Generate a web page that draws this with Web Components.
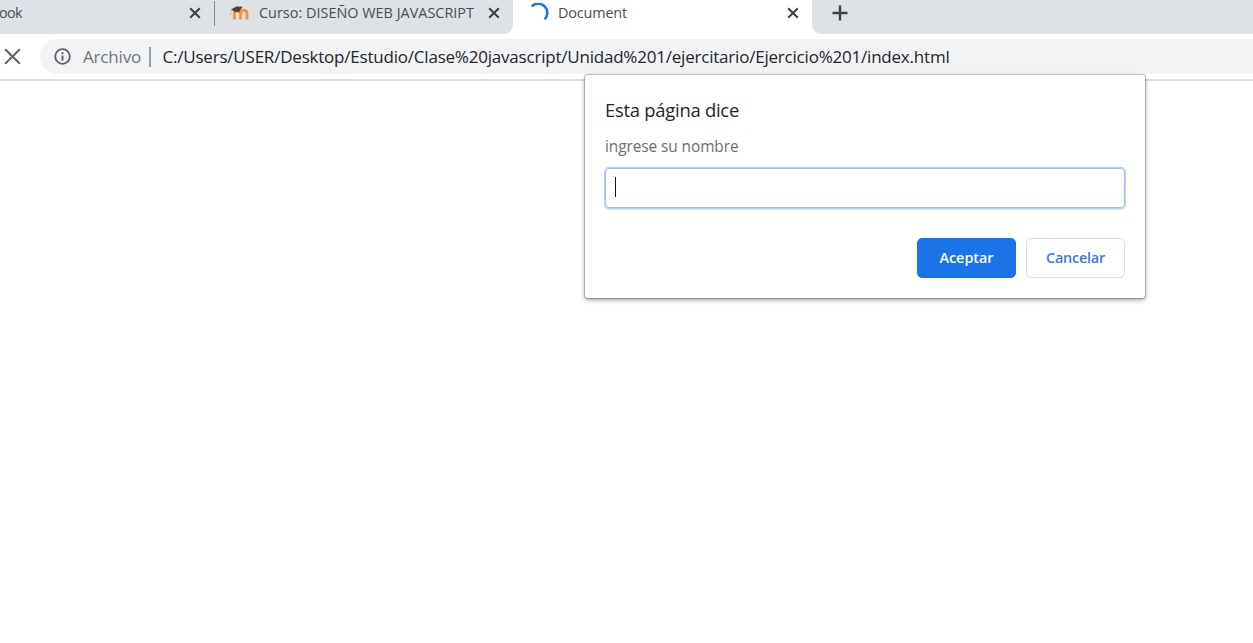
<!DOCTYPE html>
<html lang="es">
<head>
<meta charset="utf-8">
<title>Document</title>
<style>
html,body{margin:0;height:100%;overflow:hidden;background:#fff}
body{font-family:"Open Sans","Noto Sans",sans-serif}
</style>
</head>
<body>
<browser-window></browser-window>
<script>
const define = (name, html, ready) => customElements.define(name, class extends HTMLElement {
  constructor() {
    super();
    this.attachShadow({ mode: 'open' }).innerHTML = html;
  }
  connectedCallback() { if (ready) ready(this); }
});

/* One-line label whose tracking is adjusted to fill the given width. */
define('ui-label', `<style>
:host{display:block;white-space:nowrap;flex:none}
span{display:inline-block}
</style><span><slot></slot></span>`, el => {
  const w = parseFloat(el.getAttribute('width'));
  const span = el.shadowRoot.querySelector('span');
  if (!w) return;
  el.style.width = w + 'px';
  const n = el.textContent.length;
  span.style.letterSpacing = ((w - span.getBoundingClientRect().width) / n) + 'px';
});

define('close-icon', `<style>
:host{display:block;flex:none;width:12px;height:12px;color:#3c4043}
svg{display:block;width:100%;height:100%}
</style><svg viewBox="0 0 12 12"><path d="M1.2 1.2 10.8 10.8M10.8 1.2 1.2 10.8" fill="none" stroke="currentColor" stroke-width="2"/></svg>`);

define('reload-stop', `<style>
:host{display:block;flex:none;width:17px;height:17px}
svg{display:block}
</style><svg width="17" height="17" viewBox="0 0 17 17"><path d="M1.2 1.2 15.8 15.8M15.8 1.2 1.2 15.8" fill="none" stroke="#5f6368" stroke-width="2"/></svg>`);

define('moodle-icon', `<style>
:host{display:block;flex:none;width:21px;height:16px}
svg{display:block}
</style><svg width="21" height="16" viewBox="0 0 21 16">
<path d="M5.4 14.6V9Q5.4 6.2 8 6.2Q11.6 6.2 11.6 9.2V14.6M11.7 9.4Q11.8 5.2 14.8 5.2Q18 5.2 18 8.8V14.6" fill="none" stroke="#f7923c" stroke-width="2.8"/>
<path d="M2 4.6 7.4 1.4 13.6 1.8 10.8 5.8 5.6 6.4Z" fill="#48413f"/>
<path d="M4.8 5.6Q7 4.8 10.6 5.6L10.2 7.4Q7.4 6.2 5 7.6Z" fill="#5d4a42"/>
<path d="M2.2 5Q1.2 7.5 1.7 10.4" fill="none" stroke="#cbbdb6" stroke-width="1"/></svg>`);

define('loading-icon', `<style>
:host{display:block;flex:none;width:20px;height:20px}
svg{display:block}
</style><svg width="20" height="20" viewBox="0 0 20 20"><path d="M1.7 3.3A8.4 8.4 0 0 1 14.6 16.4" fill="none" stroke="#1a73e8" stroke-width="2.5"/></svg>`);

define('browser-tab', `<style>
:host{display:flex;box-sizing:border-box;height:34px;flex:none;align-items:flex-start;background:#dee1e6;color:#4a4e52;font-size:14.4px;line-height:20px;padding-top:3px}
:host([active]){background:#fff}
.title{flex:1;display:flex;min-width:0}
close-icon{margin-top:4px}
::slotted([slot=icon]){margin-right:var(--gap,9px)}
</style><slot name="icon"></slot><div class="title"><slot></slot></div><close-icon></close-icon>`);

define('tab-strip', `<style>
:host{display:flex;height:34px;background:#fff}
.one{width:214px;padding-right:13px;--gap:0}
.one ui-label{margin-left:-1px}
.sep{width:1px;height:25px;background:#85888c;margin:1px 0 0}
.rule{background:#dee1e6;height:34px;width:1px;flex:none}
.two{width:298px;padding-left:14px;padding-right:13px;border-bottom-right-radius:9px;--gap:9px}
.three{width:299px;padding-left:17px;padding-right:13.5px;--gap:8px}
.rest{flex:1;background:#dee1e6;border-bottom-left-radius:9px;padding:5px 0 0 20px}
.rest svg{display:block}
moodle-icon{margin-top:2px}
</style>
<browser-tab class="one"><ui-label width="23">ook</ui-label></browser-tab>
<div class="rule"><div class="sep"></div></div>
<browser-tab class="two"><moodle-icon slot="icon"></moodle-icon><ui-label width="215">Curso: DISEÑO WEB JAVASCRIPT</ui-label></browser-tab>
<browser-tab class="three" active><loading-icon slot="icon"></loading-icon><ui-label width="69">Document</ui-label></browser-tab>
<div class="rest"><svg width="16" height="16" viewBox="0 0 16 16"><path d="M8 .5V15.5M.5 8H15.5" stroke="#3c4043" stroke-width="2.4"/></svg></div>`);

define('address-bar', `<style>
:host{display:flex;box-sizing:border-box;height:47px;padding:5px 0 0 4px;border-bottom:2px solid #dcdde1;background:#fff}
reload-stop{margin:9px 19px 0 0}
.field{flex:1;display:flex;align-items:center;height:35px;box-sizing:border-box;background:#f1f3f4;border-radius:18px 0 0 18px;padding-left:14px;font-size:17px;line-height:24px;color:#242528}
.info{flex:none;margin-right:12px}
.kind{color:#707479}
.bar{width:2px;height:20px;background:#9aa0a6;margin:0 11.5px 0 8px}
</style>
<reload-stop></reload-stop>
<div class="field">
<svg class="info" width="17" height="17" viewBox="0 0 17 17"><circle cx="8.5" cy="8.5" r="7.3" fill="none" stroke="#5f6368" stroke-width="1.8"/><path d="M8.5 7.6V12.7M8.5 4.3V6.2" stroke="#5f6368" stroke-width="1.9"/></svg>
<ui-label class="kind" width="58">Archivo</ui-label><div class="bar"></div>
<ui-label width="787">C:/Users/USER/Desktop/Estudio/Clase%20javascript/Unidad%201/ejercitario/Ejercicio%201/index.html</ui-label>
</div>`);

define('dialog-button', `<style>
:host{display:flex;box-sizing:border-box;width:99px;height:40px;align-items:center;justify-content:center;border:1px solid #dadce0;border-radius:5px;background:#fff;color:#3b78e6;font-size:14.4px;font-weight:600;padding-bottom:2px}
:host([primary]){background:#1a73e8;border-color:#1a73e8;color:#fff}
</style><slot></slot>`);

define('prompt-dialog', `<style>
:host{display:block;box-sizing:border-box;width:560px;height:223px;padding:21px 20px 20px;background:#fff;border-radius:3px;box-shadow:0 0 0 1px rgba(0,0,0,.2),0 2px 5px rgba(0,0,0,.4)}
.heading{font-size:18.4px;line-height:28px;color:#242528}
.message{font-size:15.4px;line-height:24px;margin-top:11px;color:#6a6e73}
.input{box-sizing:border-box;height:40px;margin-top:9px;border:1px solid #a3c3ee;border-radius:4px;box-shadow:0 0 0 1px #b5d0f4,0 1px 0 1px #d8e6fa;padding:8px 9px}
.caret{width:1px;height:20px;background:#111}
.actions{display:flex;justify-content:flex-end;gap:10px;margin-top:30px}
</style>
<ui-label class="heading" width="134">Esta página dice</ui-label>
<ui-label class="message" width="133.5">ingrese su nombre</ui-label>
<div class="input" role="textbox"><div class="caret"></div></div>
<div class="actions"><dialog-button primary><ui-label width="54">Aceptar</ui-label></dialog-button><dialog-button><ui-label width="59">Cancelar</ui-label></dialog-button></div>`);

define('browser-window', `<style>
:host{display:block;position:relative;height:643px;background:#fff;overflow:hidden}
prompt-dialog{position:absolute;left:585px;top:75px}
</style><tab-strip></tab-strip><address-bar></address-bar><prompt-dialog></prompt-dialog>`);
</script>
</body>
</html>
